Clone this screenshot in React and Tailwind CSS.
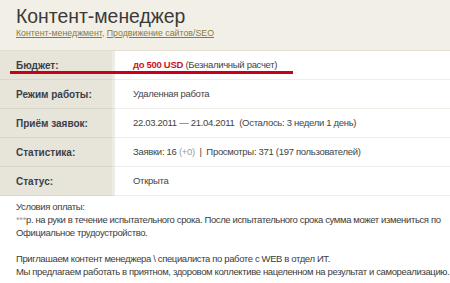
export default function App() {
  const font = { fontFamily: '"Liberation Sans", Arial, sans-serif' };
  const rows = [
    {
      label: "Бюджет:",
      value: (
        <>
          <span className="font-bold text-[#d0101e]">до 500 USD</span>&nbsp;<span>(Безналичный расчет)</span>
        </>
      ),
    },
    { label: "Режим работы:", value: "Удаленная работа" },
    { label: "Приём заявок:", value: "22.03.2011 — 21.04.2011  (Осталось: 3 недели 1 день)" },
    {
      label: "Статистика:",
      value: (
        <>
          Заявки: 16 <span className="text-[#9a9a9a]">(+0)</span>  |  Просмотры: 371 (197 пользователей)
        </>
      ),
    },
    { label: "Статус:", value: "Открыта" },
  ];
  return (
    <div className="relative w-[450px] h-[283px] overflow-hidden bg-white text-[#3c3c3c]" style={font}>
      <div className="h-[51px] bg-[#f2f0e6] border-b border-[#e2dfd2] pl-[16px] pt-[6px]">
        <div className="text-[19.4px] leading-[20px] text-[#3a3a3a]">
          Контент-менеджер
        </div>
        <div className="text-[8.8px] leading-[14px] text-[#8c7a3c]">
          <span className="underline">Контент-менеджмент</span>, <span className="underline">Продвижение сайтов/SEO</span>
        </div>
      </div>
      <div>
        {rows.map((r, i) => (
          <div key={i} className="grid grid-cols-[115px_1fr] h-[29px]">
            <div className="bg-[#e7e5da] border-b border-[#d9d7cb] border-r-[3px] border-r-[#eeede5] flex items-center pl-[16px] text-[10px] font-bold text-[#3a3f4a]">
              {r.label}
            </div>
            <div className="border-b border-[#efeee6] flex items-center pl-[18px] text-[9.5px] tracking-[-0.3px] text-[#444] whitespace-pre">
              {r.value}
            </div>
          </div>
        ))}
      </div>
      <div className="pl-[16px] pt-[4px] text-[9.5px] tracking-[-0.37px] leading-[13px] text-[#3c3c3c] whitespace-nowrap">
        <div>Условия оплаты:</div>
        <div>
          <span className="text-[#a0a0a0]">***</span>р. на руки в течение испытательного срока. После испытательного срока сумма может измениться по
        </div>
        <div>Официальное трудоустройство.</div>
        <div>&nbsp;</div>
        <div>Приглашаем контент менеджера \ специалиста по работе с WEB в отдел ИТ.</div>
        <div>Мы предлагаем работать в приятном, здоровом коллективе нацеленном на результат и самореализацию.</div>
      </div>
      <div className="absolute left-[10px] top-[71px] w-[283px] h-[3px] bg-[#c8001a]" />
    </div>
  );
}
